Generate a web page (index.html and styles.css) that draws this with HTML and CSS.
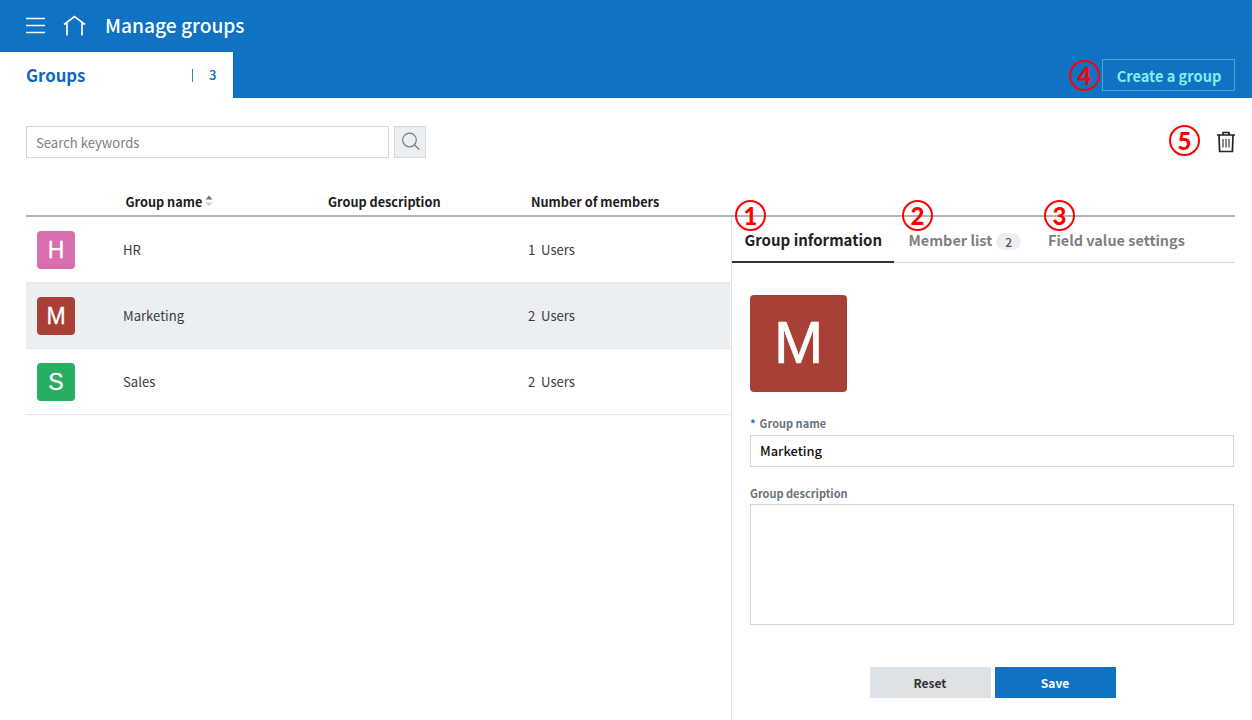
FILE: index.html
```html
<!DOCTYPE html>
<html lang="en">
<head>
<meta charset="utf-8">
<title>Manage groups</title>
<link rel="stylesheet" href="styles.css">
</head>
<body>
<header class="topbar">
  <svg class="menu-icon" width="20" height="18" viewBox="0 0 20 18"><path d="M0 1.500H19M0 8.500H19M0 15.500H19"/></svg>
  <svg class="home-icon" width="24" height="22" viewBox="0 0 24 22"><path d="M1 9.500L11.500 1.500L22 9.500M4 7.500V20.500M19 7.500V20.500"/></svg>
  <h1 class="title">Manage groups</h1>
</header>
<nav class="tabbar">
  <div class="main-tab"><span class="main-tab-name">Groups</span><i class="divider"></i><span class="main-tab-count">3</span></div>
  <button class="create"><span>Create a group</span><b class="mark mark-create">4</b></button>
</nav>
<main class="content">
  <div class="toolbar">
    <input class="search" placeholder="Search keywords">
    <button class="search-btn"><svg width="20" height="20" viewBox="0 0 20 20"><circle cx="8.500" cy="8" r="6.800"/><path d="M13.300 12.800L18.300 17.500"/></svg></button>
    <div class="delete"><svg width="18" height="22" viewBox="0 0 18 22"><path d="M0 4H18M6 3.500V1.500H12V3.500M2 4.500L2.600 20.500H15.400L16 4.500"/><path class="thin" d="M6 8V16.500M9 8V16.500M12 8V16.500"/></svg><b class="mark mark-delete">5</b></div>
  </div>
  <div class="columns">
    <span class="col-name"><span>Group name</span><svg width="8" height="12" viewBox="0 0 8 12"><path fill="#777" d="M0.500 4.500L4 .5L7.500 4.500Z"/><path fill="#ccc" d="M.5 7.500L4 11L7.500 7.500Z"/></svg></span>
    <span class="col-desc">Group description</span>
    <span class="col-members">Number of members</span>
  </div>
  <div class="split">
    <section class="list">
      <div class="row"><span class="avatar pink">H</span><span class="name">HR</span><span class="count">1</span><span>Users</span></div>
      <div class="row selected"><span class="avatar red">M</span><span class="name">Marketing</span><span class="count">2</span><span>Users</span></div>
      <div class="row"><span class="avatar green">S</span><span class="name">Sales</span><span class="count">2</span><span>Users</span></div>
    </section>
    <section class="panel">
      <div class="tabs">
        <div class="tab active"><span class="tab-info">Group information</span><b class="mark mark-info">1</b></div>
        <div class="tab members"><span class="tab-members">Member list</span><span class="pill">2</span><b class="mark mark-members">2</b></div>
        <div class="tab fields"><span class="tab-fields">Field value settings</span><b class="mark mark-fields">3</b></div>
      </div>
      <div class="form">
        <div class="portrait">M</div>
        <label class="label label-name"><span class="star">*</span>Group name</label>
        <input class="input" value="Marketing">
        <label class="label label-desc">Group description</label>
        <textarea class="area"></textarea>
        <div class="actions"><button class="btn">Reset</button><button class="btn save">Save</button></div>
      </div>
    </section>
  </div>
</main>
</body>
</html>
```
FILE: styles.css
```css
* { box-sizing: border-box; }
body { margin: 0; height: 720px; overflow: hidden; background: #fff; color: #3a3a3a; font: 400 13.100px/20px "Noto Sans CJK JP", "Noto Sans", sans-serif; }
button, input, textarea { font: inherit; border-radius: 0; outline: 0; margin: 0; }
svg { display: block; fill: none; flex: none; }
.topbar { height: 52px; background: #0f72c3; display: flex; align-items: center; padding-left: 26px; }
.menu-icon { stroke: #fff; stroke-width: 1.700; }
.home-icon { stroke: #fff; stroke-width: 1.700; margin-left: 17px; }
.title { margin: -2px 0 0 18px; font-size: 19.200px; line-height: 28px; font-weight: 500; color: #fff; white-space: nowrap; }
.tabbar { height: 46px; background: #0f72c3; display: flex; justify-content: space-between; align-items: flex-start; padding-right: 17px; }
.main-tab { width: 233px; height: 47px; background: #fff; color: #0f68bd; display: flex; align-items: center; padding: 0 16.500px 2px 26px; }
.main-tab-name { font-size: 16.800px; font-weight: 700; }
.divider { width: 1px; height: 13px; background: #3f83bd; margin: 2px 16px 0 auto; }
.main-tab-count { font-size: 13px; font-weight: 500; }
.create { position: relative; margin-top: 7px; width: 133px; height: 32px; border: 1px solid #43a9d3; background: none; padding: 1px 0 0 1px; color: #7df0ee; font-size: 14.600px; font-weight: 700; line-height: 30px; white-space: nowrap; }
.content { padding: 28px 17px 0 26px; height: 622px; }
.toolbar { display: flex; height: 32px; }
.search { width: 363px; border: 1px solid #d4d6d6; padding: 1px 9px 0; color: #333; }
.search::placeholder { color: #808080; opacity: 1; }
.search-btn { width: 32px; margin-left: 5px; border: 1px solid #d4d8da; background: #ebeff2; padding: 0 0 1px 6px; }
.search-btn svg { stroke: #777; stroke-width: 1.200; }
.delete { position: relative; margin: 5px 0 0 auto; }
.delete svg { stroke: #222; stroke-width: 1.700; }
.delete .thin { stroke-width: 1.400; stroke: #555; }
.columns { margin-top: 28px; height: 31px; border-bottom: 2px solid #b4b4b4; display: flex; color: #1c1c1c; line-height: 31px; font-weight: 700; font-size: 12.700px; }
.col-name { margin-left: 99.500px; width: 202.500px; display: flex; align-items: flex-start; }
.col-name svg { margin: 9px 0 0 3px; }
.col-desc { width: 203px; }
.split { display: flex; height: 503px; }
.list { width: 704px; }
.row { height: 66px; border-bottom: 1px solid #e4e6e7; display: flex; align-items: center; padding-left: 11px; line-height: 22px; }
.row > :not(.avatar) { padding-top: 1px; }
.selected { background: #ebeff2; }
.avatar { width: 38px; height: 38px; border-radius: 4px; color: #fff; text-align: center; font: 23px/38px "Liberation Sans", sans-serif; -webkit-text-stroke: .3px #fff; margin-right: 48px; }
.pink { background: #d76fae; } .red { background: #a84036; } .green { background: #27ae60; }
.name { width: 405px; }
.count { width: 13px; }
.panel { flex: 1; margin-left: 1px; border-left: 1px solid #e2e2e2; }
.tabs { display: flex; height: 46px; border-bottom: 1px solid #d8d8d8; font-size: 15px; font-weight: 700; line-height: 46px; color: #808080; white-space: nowrap; }
.tab { position: relative; height: 46px; display: flex; align-items: center; }
.active { width: 162px; padding-left: 12.500px; color: #222; border-bottom: 2px solid #333; }
.tab-info { padding-top: 2px; }
.members { padding-left: 14.500px; width: 139px; }
.fields { padding-left: 15px; }
.tab-members, .tab-fields { font-size: 14.450px; }
.pill { width: 25px; height: 17px; border-radius: 9px; background: #ebeff2; color: #555; font-size: 12px; font-weight: 500; line-height: 17px; text-align: center; margin: 2px 0 0 4px; }
.form { padding: 32px 1px 0 18px; display: flex; flex-direction: column; }
.portrait { width: 97px; height: 97px; background: #a84036; border-radius: 4px; color: #fff; text-align: center; font: 59px/97px "Liberation Sans", sans-serif; -webkit-text-stroke: .7px #fff; }
.label { font-size: 11px; font-weight: 700; line-height: 20px; color: #69737a; }
.label-name { margin-top: 21px; }
.label-desc { margin-top: 16px; }
.star { color: #0f72c3; margin-right: 4px; }
.input { margin-top: 2px; height: 32px; border: 1px solid #d4d4d4; padding: 0 9px 1px; color: #111; font-size: 12.900px; font-weight: 500; }
.area { margin-top: 1px; height: 121px; border: 1px solid #d4d4d4; resize: none; }
.actions { margin-top: 42px; display: flex; gap: 4px; padding-left: 119.500px; }
.btn { width: 121px; height: 31px; border: 0; background: #dce2e6; color: #333; font-size: 12px; font-weight: 700; padding: 0; }
.save { background: #0f72c3; color: #fff; }
.mark { position: absolute; width: 31px; height: 31px; border: 2px solid #f00; border-radius: 50%; color: #f00; text-align: center; font: 900 24px/27px "Lato", sans-serif; }
.mark-create { left: -34px; top: 0; }
.mark-delete { left: -48px; top: -6px; }
.mark-info { left: 3px; top: -17px; }
.mark-members { left: 8px; top: -17px; }
.mark-fields { left: 11px; top: -17px; }
```
